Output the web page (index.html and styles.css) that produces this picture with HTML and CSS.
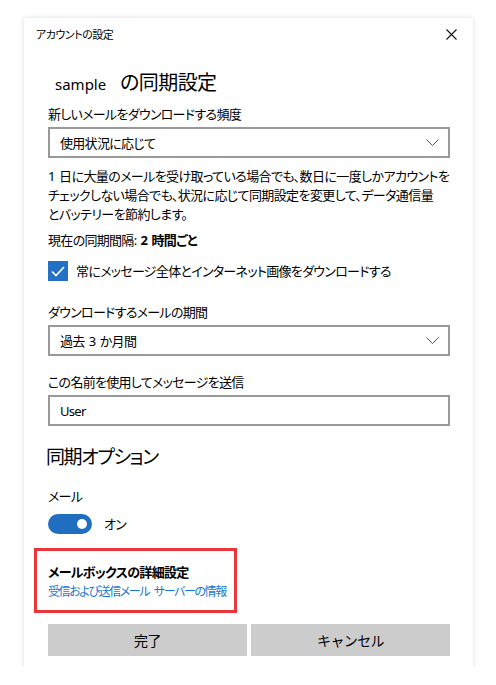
FILE: index.html
```html
<!DOCTYPE html>
<html lang="ja">
<head>
    <meta charset="UTF-8">
    <meta name="viewport" content="width=device-width, initial-scale=1.0">
    <title>アカウントの設定</title>
    <link rel="stylesheet" href="styles.css">
</head>
<body>

    <div class="dialog">
        <div class="titlebar">
            <span class="title">アカウントの設定</span>
            <svg class="close" width="11" height="11" viewBox="0 0 11 11">
                <path d="M0.5 0.5 L10.5 10.5 M10.5 0.5 L0.5 10.5" stroke="#111" stroke-width="1.1" fill="none"/>
            </svg>
        </div>

        <div class="content">
            <h1 class="heading"><span class="account">sample</span>の同期設定</h1>

            <div class="label">新しいメールをダウンロードする頻度</div>
            <div class="select">
                <span>使用状況に応じて</span>
                <svg width="13" height="8" viewBox="0 0 13 8"><polyline points="0.5,0.5 6.5,6.5 12.5,0.5" stroke="#555" fill="none"/></svg>
            </div>

            <p class="desc">1 日に大量のメールを受け取っている場合でも、数日に一度しかアカウントを<br>チェックしない場合でも、状況に応じて同期設定を変更して、データ通信量<br>とバッテリーを節約します。</p>

            <div class="interval">現在の同期間隔: <b>2 時間ごと</b></div>

            <label class="check">
                <span class="box">
                    <svg width="14" height="11" viewBox="0 0 14 11"><polyline points="1,5.5 5,9.5 13,1" stroke="#fff" stroke-width="1.6" fill="none"/></svg>
                </span>
                常にメッセージ全体とインターネット画像をダウンロードする
            </label>

            <div class="label gap">ダウンロードするメールの期間</div>
            <div class="select">
                <span>過去 3 か月間</span>
                <svg width="13" height="8" viewBox="0 0 13 8"><polyline points="0.5,0.5 6.5,6.5 12.5,0.5" stroke="#555" fill="none"/></svg>
            </div>

            <div class="label gap-sm">この名前を使用してメッセージを送信</div>
            <div class="select">
                <span>User</span>
            </div>

            <h2 class="section">同期オプション</h2>

            <div class="label sub">メール</div>
            <div class="toggle-row">
                <span class="toggle"><span class="knob"></span></span>
                <span>オン</span>
            </div>

            <div class="highlight">
                <div class="adv-title">メールボックスの詳細設定</div>
                <a class="adv-link" href="#">受信および送信メール サーバーの情報</a>
            </div>

            <div class="buttons">
                <button>完了</button>
                <button>キャンセル</button>
            </div>
        </div>
    </div>

</body>
</html>
```

FILE: styles.css
```css
body {
    margin: 0;
    background: #fff;
    color: #000;
    font-family: "Noto Sans", "Noto Sans CJK JP", sans-serif;
    font-feature-settings: "palt";
    font-size: 13px;
    letter-spacing: -0.7px;
    word-spacing: 1.5px;
}
.dialog {
    width: 449px;
    margin: 18px 0 0 24px;
    background: #fff;
    box-shadow: 0 0 5px rgba(0, 0, 0, 0.14);
}
.titlebar {
    height: 32px;
    display: flex;
    align-items: center;
    justify-content: space-between;
    padding: 0 16px 0 12px;
}
.title {
    font-size: 11px;
    letter-spacing: -0.5px;
    line-height: 20px;
    margin-top: 1px;
}
.close {
    margin-top: 1px;
}
.content {
    padding: 0 23px 11px 24px;
}
.heading {
    margin: 19px 0 0 7px;
    font-size: 20px;
    font-weight: normal;
    letter-spacing: -0.6px;
    line-height: 28px;
}
.account {
    font-size: 15px;
    letter-spacing: 0;
    margin-right: 14px;
}
.label {
    line-height: 20px;
    margin-top: 6px;
}
.label.gap {
    margin-top: 21px;
}
.label.gap-sm {
    margin-top: 16px;
}
.label.sub {
    margin-top: 15px;
}
.select {
    margin-top: 3px;
    height: 31px;
    box-sizing: border-box;
    border: 2px solid #999;
    display: flex;
    align-items: center;
    justify-content: space-between;
    padding: 0 9px 0 10px;
    line-height: 20px;
}
.desc {
    margin: 9px 0 0;
    line-height: 19px;
    letter-spacing: -0.6px;
    white-space: nowrap;
}
.interval {
    margin-top: 6px;
    line-height: 20px;
}
.check {
    display: flex;
    align-items: center;
    margin-top: 11px;
    line-height: 20px;
}
.box {
    width: 20px;
    height: 20px;
    background: #2470c4;
    display: flex;
    align-items: center;
    justify-content: center;
    margin-right: 8px;
}
.section {
    margin: 17px 0 0 -2px;
    font-size: 19px;
    font-weight: normal;
    letter-spacing: -1.4px;
    line-height: 28px;
}
.toggle-row {
    display: flex;
    align-items: center;
    margin-top: 8px;
    line-height: 20px;
}
.toggle {
    width: 44px;
    height: 20px;
    border-radius: 10px;
    background: #1f6ec0;
    display: flex;
    align-items: center;
    justify-content: flex-end;
    padding-right: 5px;
    box-sizing: border-box;
    margin-right: 12px;
}
.knob {
    width: 10px;
    height: 10px;
    border-radius: 50%;
    background: #fff;
}
.highlight {
    width: 186px;
    margin: 14px 0 0 -14px;
    border: 3px solid #e8363c;
    padding: 12px 0 9px 11px;
}
.adv-title {
    font-weight: bold;
    line-height: 19px;
}
.adv-link {
    display: block;
    color: #1777cf;
    text-decoration: none;
    line-height: 19px;
    font-size: 12px;
    letter-spacing: -1.4px;
    word-spacing: 3px;
    white-space: nowrap;
}
.buttons {
    display: flex;
    gap: 4px;
    margin-top: 11px;
}
.buttons button {
    flex: 1;
    height: 32px;
    border: none;
    background: #ccc;
    font-family: inherit;
    font-size: 14px;
    letter-spacing: -0.6px;
    color: #000;
}
```
